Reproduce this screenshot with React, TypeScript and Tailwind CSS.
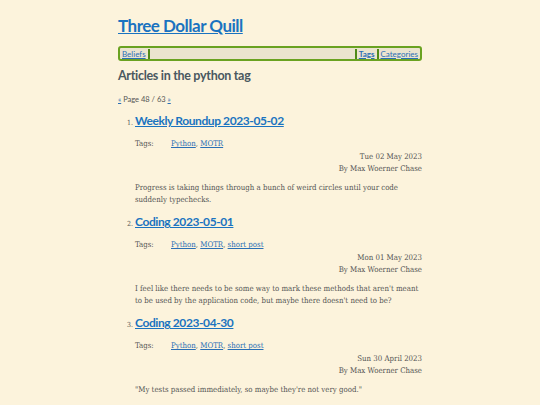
import React from 'react';

type Article = {
  title: string;
  tags: string[];
  date: string;
  summary: string[];
};

const articles: Article[] = [
  {
    title: 'Weekly Roundup 2023-05-02',
    tags: ['Python', 'MOTR'],
    date: 'Tue 02 May 2023',
    summary: ['Progress is taking things through a bunch of weird circles until your code', 'suddenly typechecks.'],
  },
  {
    title: 'Coding 2023-05-01',
    tags: ['Python', 'MOTR', 'short post'],
    date: 'Mon 01 May 2023',
    summary: [
      "I feel like there needs to be some way to mark these methods that aren't meant",
      "to be used by the application code, but maybe there doesn't need to be?",
    ],
  },
  {
    title: 'Coding 2023-04-30',
    tags: ['Python', 'MOTR', 'short post'],
    date: 'Sun 30 April 2023',
    summary: ['"My tests passed immediately, so maybe they\'re not very good."'],
  },
];

const sans = "font-['Lato','Noto_Sans',sans-serif]";
const serif = "font-['DejaVu_Serif_Condensed','DejaVu_Serif',serif]";

const ArticleItem: React.FC<{ article: Article; index: number }> = ({ article, index }) => (
  <li className="flex flex-col">
    <div className="flex items-baseline">
      <span className={`${serif} w-[17px] shrink-0 pr-[2px] text-right text-[7px] text-[#555]`}>{index}.</span>
      <a
        href="#"
        className={`${sans} text-[12px] font-bold leading-[18px] tracking-[-0.4px] text-[#1a73c0] underline`}
      >
        {article.title}
      </a>
    </div>
    <div className="pl-[17px]">
      <div className={`${serif} mt-[9px] flex text-[7.8px] leading-[10px] text-[#555]`}>
        <span className="w-[36px]">Tags:</span>
        <span>
          {article.tags.map((t, i) => (
            <React.Fragment key={t}>
              <a href="#" className="text-[#2a6fb5] underline">
                {t}
              </a>
              {i < article.tags.length - 1 && ', '}
            </React.Fragment>
          ))}
        </span>
      </div>
      <div className={`${serif} mt-[2px] text-right text-[7.8px] leading-[12px] text-[#555]`}>
        <div>{article.date}</div>
        <div>By Max Woerner Chase</div>
      </div>
      <p className={`${serif} mt-[7px] text-[7.8px] leading-[12px] text-[#555]`}>
        {article.summary.map((line) => (
          <span key={line} className="block whitespace-nowrap">
            {line}
          </span>
        ))}
      </p>
    </div>
  </li>
);

export default function App() {
  return (
    <div className="min-h-[405px] w-full bg-[#fcf3dc]">
      <div className="mx-auto w-[304px] pt-[14px]">
        <a
          href="#"
          className={`${sans} text-[17px] font-bold leading-[22px] tracking-[-0.5px] text-[#1a73c0] underline`}
        >
          Three Dollar Quill
        </a>
        <nav
          className={`${sans} mt-[8px] flex h-[15px] items-center rounded-[3px] border-2 border-[#6aa221] bg-[#ebe4cf] px-[2px] text-[8px]`}
        >
          <a href="#" className="text-[#2a6fb5] underline">Beliefs</a>
          <span className="ml-[2px] h-[10px] w-[2px] bg-[#4f8a17]" />
          <span className="flex-1" />
          <span className="mr-[2px] h-[10px] w-[2px] bg-[#4f8a17]" />
          <a href="#" className="font-bold text-[#2a6fb5] underline">Tags</a>
          <span className="mx-[2px] h-[10px] w-[2px] bg-[#4f8a17]" />
          <a href="#" className="text-[#2a6fb5] underline">Categories</a>
        </nav>
        <h1
          className={`${sans} mt-[6px] text-[12.5px] font-bold leading-[18px] tracking-[-0.3px] text-[#4a5860]`}
        >
          Articles in the python tag
        </h1>
        <div className={`${sans} mt-[9px] text-[7.5px] text-[#555]`}>
          <a href="#" className="text-[#2a6fb5] underline">«</a> Page 48 / 63{' '}
          <a href="#" className="text-[#2a6fb5] underline">»</a>
        </div>
        <ol className="mt-[7px] flex flex-col gap-[7px]">
          {articles.map((a, i) => (
            <ArticleItem key={a.title} article={a} index={i + 1} />
          ))}
        </ol>
      </div>
    </div>
  );
}
